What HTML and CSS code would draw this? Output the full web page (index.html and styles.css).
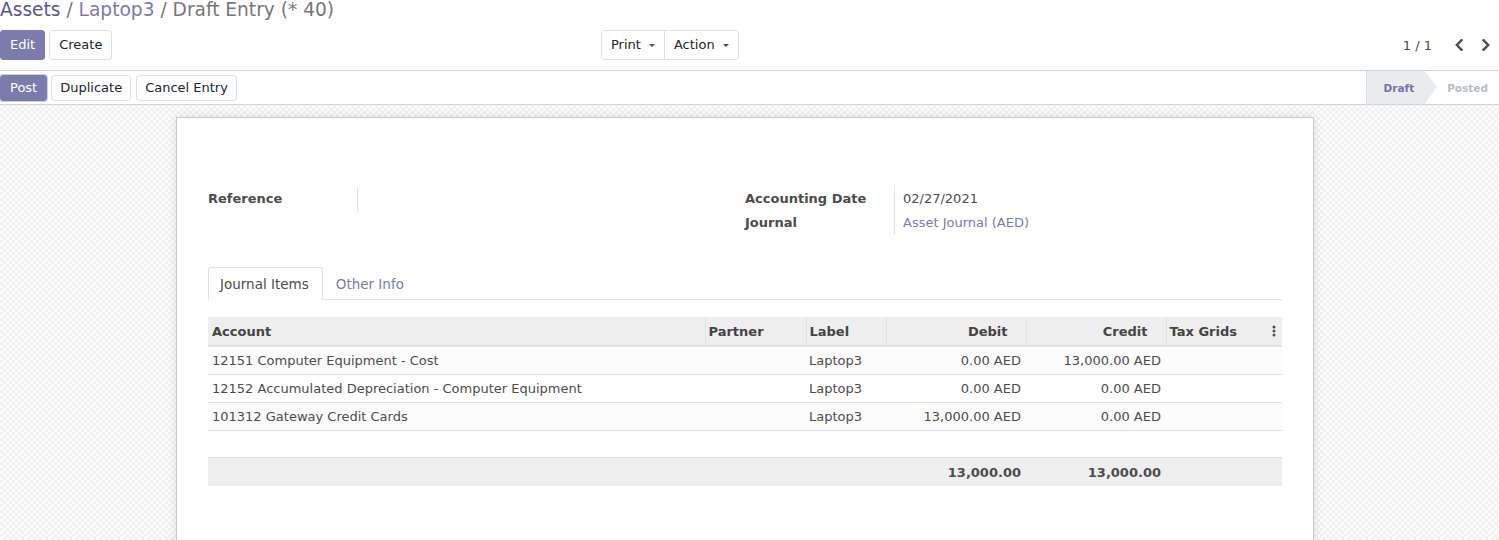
FILE: index.html
```html
<!DOCTYPE html>
<html lang="en">
<head>
<meta charset="utf-8">
<title>Draft Entry</title>
<link rel="stylesheet" href="styles.css">
</head>
<body>
<div class="app">
  <div class="cp">
    <div class="breadcrumb"><a class="crumb crumb-hover">Assets</a><span class="crumb-sep"> / </span><a class="crumb">Laptop3</a><span class="crumb-sep"> / </span><span class="crumb-active">Draft Entry (* 40)</span></div>
    <div class="cp-bar">
      <div class="cp-left">
        <button class="btn btn-primary">Edit</button>
        <button class="btn">Create</button>
      </div>
      <div class="btn-group">
        <button class="btn">Print<span class="caret"></span></button>
        <button class="btn">Action<span class="caret"></span></button>
      </div>
      <div class="pager">
        <span class="pager-value">1 / 1</span>
        <button class="pager-btn" aria-label="Previous"><svg width="10" height="12" viewBox="0 0 10 12"><path d="M7.5 1.2 L2.8 6 L7.5 10.8" fill="none" stroke="#4c4c4c" stroke-width="2.4" stroke-linecap="square"/></svg></button>
        <button class="pager-btn" aria-label="Next"><svg width="10" height="12" viewBox="0 0 10 12"><path d="M2.5 1.2 L7.2 6 L2.5 10.8" fill="none" stroke="#4c4c4c" stroke-width="2.4" stroke-linecap="square"/></svg></button>
      </div>
    </div>
  </div>

  <div class="statusbar">
    <div class="sb-buttons">
      <button class="btn btn-sm btn-primary btn-focus">Post</button>
      <button class="btn btn-sm">Duplicate</button>
      <button class="btn btn-sm btn-cancel">Cancel Entry</button>
    </div>
    <div class="sb-status">
      <span class="st st-active">Draft</span>
      <span class="st st-next">Posted</span>
    </div>
  </div>

  <div class="form-bg">
    <div class="sheet">
      <div class="groups">
        <div class="group">
          <div class="label">Reference</div>
          <div class="value"></div>
        </div>
        <div class="group">
          <div class="label">Accounting Date</div>
          <div class="value">02/27/2021</div>
          <div class="label">Journal</div>
          <div class="value"><a class="link">Asset Journal (AED)</a></div>
        </div>
      </div>

      <div class="tabs">
        <a class="tab tab-active">Journal Items</a>
        <a class="tab">Other Info</a>
      </div>

      <table class="list">
        <colgroup>
          <col class="c-account">
          <col class="c-partner">
          <col class="c-label">
          <col class="c-debit">
          <col class="c-credit">
          <col class="c-tax">
        </colgroup>
        <thead>
          <tr>
            <th>Account</th>
            <th>Partner</th>
            <th>Label</th>
            <th class="num">Debit</th>
            <th class="num">Credit</th>
            <th class="th-tax">Tax Grids<span class="kebab"><svg width="4" height="12" viewBox="0 0 4 12"><circle cx="2" cy="2" r="1.5" fill="#4c4c4c"/><circle cx="2" cy="6" r="1.5" fill="#4c4c4c"/><circle cx="2" cy="10" r="1.5" fill="#4c4c4c"/></svg></span></th>
          </tr>
        </thead>
        <tbody>
          <tr class="row">
            <td>12151 Computer Equipment - Cost</td>
            <td></td>
            <td>Laptop3</td>
            <td class="num">0.00 AED</td>
            <td class="num">13,000.00 AED</td>
            <td></td>
          </tr>
          <tr class="row">
            <td>12152 Accumulated Depreciation - Computer Equipment</td>
            <td></td>
            <td>Laptop3</td>
            <td class="num">0.00 AED</td>
            <td class="num">0.00 AED</td>
            <td></td>
          </tr>
          <tr class="row">
            <td>101312 Gateway Credit Cards</td>
            <td></td>
            <td>Laptop3</td>
            <td class="num">13,000.00 AED</td>
            <td class="num">0.00 AED</td>
            <td></td>
          </tr>
          <tr class="filler">
            <td></td><td></td><td></td><td></td><td></td><td></td>
          </tr>
        </tbody>
        <tfoot>
          <tr>
            <td></td>
            <td></td>
            <td></td>
            <td class="num">13,000.00</td>
            <td class="num">13,000.00</td>
            <td></td>
          </tr>
        </tfoot>
      </table>
    </div>
  </div>
</div>
</body>
</html>
```

FILE: styles.css
```css
html, body {
  margin: 0;
  padding: 0;
  height: 100%;
  overflow: hidden;
}

body {
  font-family: "DejaVu Sans", "Noto Sans", sans-serif;
  font-size: 13px;
  color: #4c4c4c;
  background: #fff;
}

.app {
  display: flex;
  flex-direction: column;
  height: 100%;
}

/* ---------- control panel ---------- */
.cp {
  border-bottom: 1px solid #ced4da;
}

.breadcrumb {
  font-size: 18.6px;
  line-height: 20px;
  height: 20px;
  white-space: pre;
}

.crumb {
  color: #7c7bad;
  text-decoration: none;
}

.crumb-hover {
  color: #58578c;
}

.crumb-sep,
.crumb-active {
  color: #777;
}

.cp-bar {
  display: flex;
  align-items: center;
  padding: 10px 0;
}

.cp-left {
  flex: 0 0 601px;
  display: flex;
  gap: 4px;
}

.btn {
  font-family: inherit;
  font-size: 13px;
  height: 30px;
  line-height: 28px;
  padding: 0 9px;
  border: 1px solid #dee2e6;
  border-radius: 3px;
  background: #fff;
  color: #212529;
  display: inline-flex;
  align-items: center;
  cursor: pointer;
}

.btn-primary {
  background: #7c7bad;
  border-color: #7c7bad;
  color: #fff;
}

.btn-sm {
  height: 26px;
  line-height: 24px;
  padding: 0 8px;
}

.btn-focus {
  padding: 0 9px;
  box-shadow: 0 0 0 1px rgba(124, 123, 173, 0.35);
}

.btn-cancel {
  margin-left: 1px;
}

.btn-group {
  display: flex;
}

.btn-group .btn {
  border-radius: 0;
}

.btn-group .btn + .btn {
  margin-left: -1px;
}

.btn-group .btn:first-child {
  border-radius: 3px 0 0 3px;
}

.btn-group .btn:last-child {
  border-radius: 0 3px 3px 0;
}

.caret {
  display: inline-block;
  margin-left: 8px;
  width: 0;
  height: 0;
  border-top: 3px solid #4c4c4c;
  border-left: 3px solid transparent;
  border-right: 3px solid transparent;
}

.pager {
  margin-left: auto;
  display: flex;
  align-items: center;
}

.pager-value {
  margin-right: 13px;
  color: #4c4c4c;
}

.pager-btn {
  width: 27px;
  height: 30px;
  border: 0;
  background: transparent;
  padding: 0;
  display: flex;
  align-items: center;
  justify-content: center;
  cursor: pointer;
}

/* ---------- status bar ---------- */
.statusbar {
  display: flex;
  justify-content: space-between;
  height: 33px;
  border-bottom: 1px solid #ced4da;
  background: #fff;
}

.sb-buttons {
  display: flex;
  align-items: center;
  gap: 4px;
}

.sb-status {
  display: flex;
}

.st {
  position: relative;
  display: flex;
  align-items: center;
  font-size: 10.5px;
  font-weight: bold;
  padding: 0 11px 0 17px;
  color: #b6bcc6;
}

.st-active {
  background: #e9ecef;
  color: #7473a6;
  border-left: 1px solid #dee2e6;
}

.st-active::after {
  content: "";
  position: absolute;
  top: 0;
  right: -12px;
  border-left: 12px solid #e9ecef;
  border-top: 16.5px solid transparent;
  border-bottom: 16.5px solid transparent;
}

.st-next {
  padding-left: 22px;
}

/* ---------- form background & sheet ---------- */
.form-bg {
  flex: 1;
  min-height: 0;
  overflow: hidden;
  padding: 12px 9px 0 0;
  background-color: #f9f9f9;
  background-image: repeating-conic-gradient(#f1f1f1 0% 25%, #fdfdfd 0% 50%);
  background-size: 6px 6px;
}

.sheet {
  box-sizing: border-box;
  width: 1138px;
  margin: 0 auto;
  background: #fff;
  border: 1px solid #c9c9d3;
  box-shadow: 0 0 10px rgba(0, 0, 0, 0.12);
  padding: 69px 31px 80px;
}

.groups {
  display: grid;
  grid-template-columns: 1fr 1fr;
}

.group {
  display: grid;
  grid-template-columns: 150px 1fr;
  align-content: start;
}

.label,
.value {
  line-height: 24px;
  min-height: 24px;
}

.label {
  box-sizing: border-box;
  font-weight: bold;
  color: #4c4c4c;
  border-right: 1px solid #dee2e6;
}

.value {
  padding-left: 8px;
}

.link {
  color: #7c7bad;
  text-decoration: none;
}

/* ---------- tabs ---------- */
.tabs {
  display: flex;
  margin-top: 32px;
  border-bottom: 1px solid #dee2e6;
}

.tab {
  font-size: 13.5px;
  padding: 0 12px;
  line-height: 32px;
  border: 1px solid transparent;
  border-bottom: 0;
  margin-bottom: -1px;
  border-radius: 3px 3px 0 0;
  color: #7c7bad;
  text-decoration: none;
}

.tab-active {
  color: #4c4c4c;
  border-color: #dee2e6;
  background: #fff;
  padding: 0 13px 0 11px;
}

/* ---------- list ---------- */
.list {
  width: 100%;
  margin-top: 17px;
  border-collapse: collapse;
  table-layout: fixed;
}

.c-account { width: 497px; }
.c-partner { width: 101px; }
.c-label { width: 80px; }
.c-debit { width: 140px; }
.c-credit { width: 140px; }
.c-tax { width: 116px; }

.list th {
  height: 28px;
  padding: 0 3px;
  background: #eee;
  color: #444;
  font-weight: bold;
  text-align: left;
  border-left: 1px solid #dee2e6;
  border-bottom: 2px solid #dee2e6;
  white-space: nowrap;
}

.list th:first-child {
  border-left: 0;
  padding-left: 4px;
}

.list th.num {
  text-align: right;
  padding-right: 18px;
}

.th-tax {
  position: relative;
}

.kebab {
  position: absolute;
  right: 6px;
  top: 8px;
  line-height: 0;
}

.list td {
  height: 27px;
  padding: 0 5px 0 3px;
  white-space: nowrap;
}

.list td:first-child {
  padding-left: 4px;
}

.list td.num {
  text-align: right;
}

.row td {
  border-bottom: 1px solid #dee2e6;
}

.row:nth-child(odd) td {
  background: #fcfcfc;
}

.filler td {
  height: 26px;
}

.list tfoot td {
  height: 28px;
  background: #eee;
  border-top: 1px solid #dee2e6;
  font-weight: bold;
  color: #4c4c4c;
}
```
